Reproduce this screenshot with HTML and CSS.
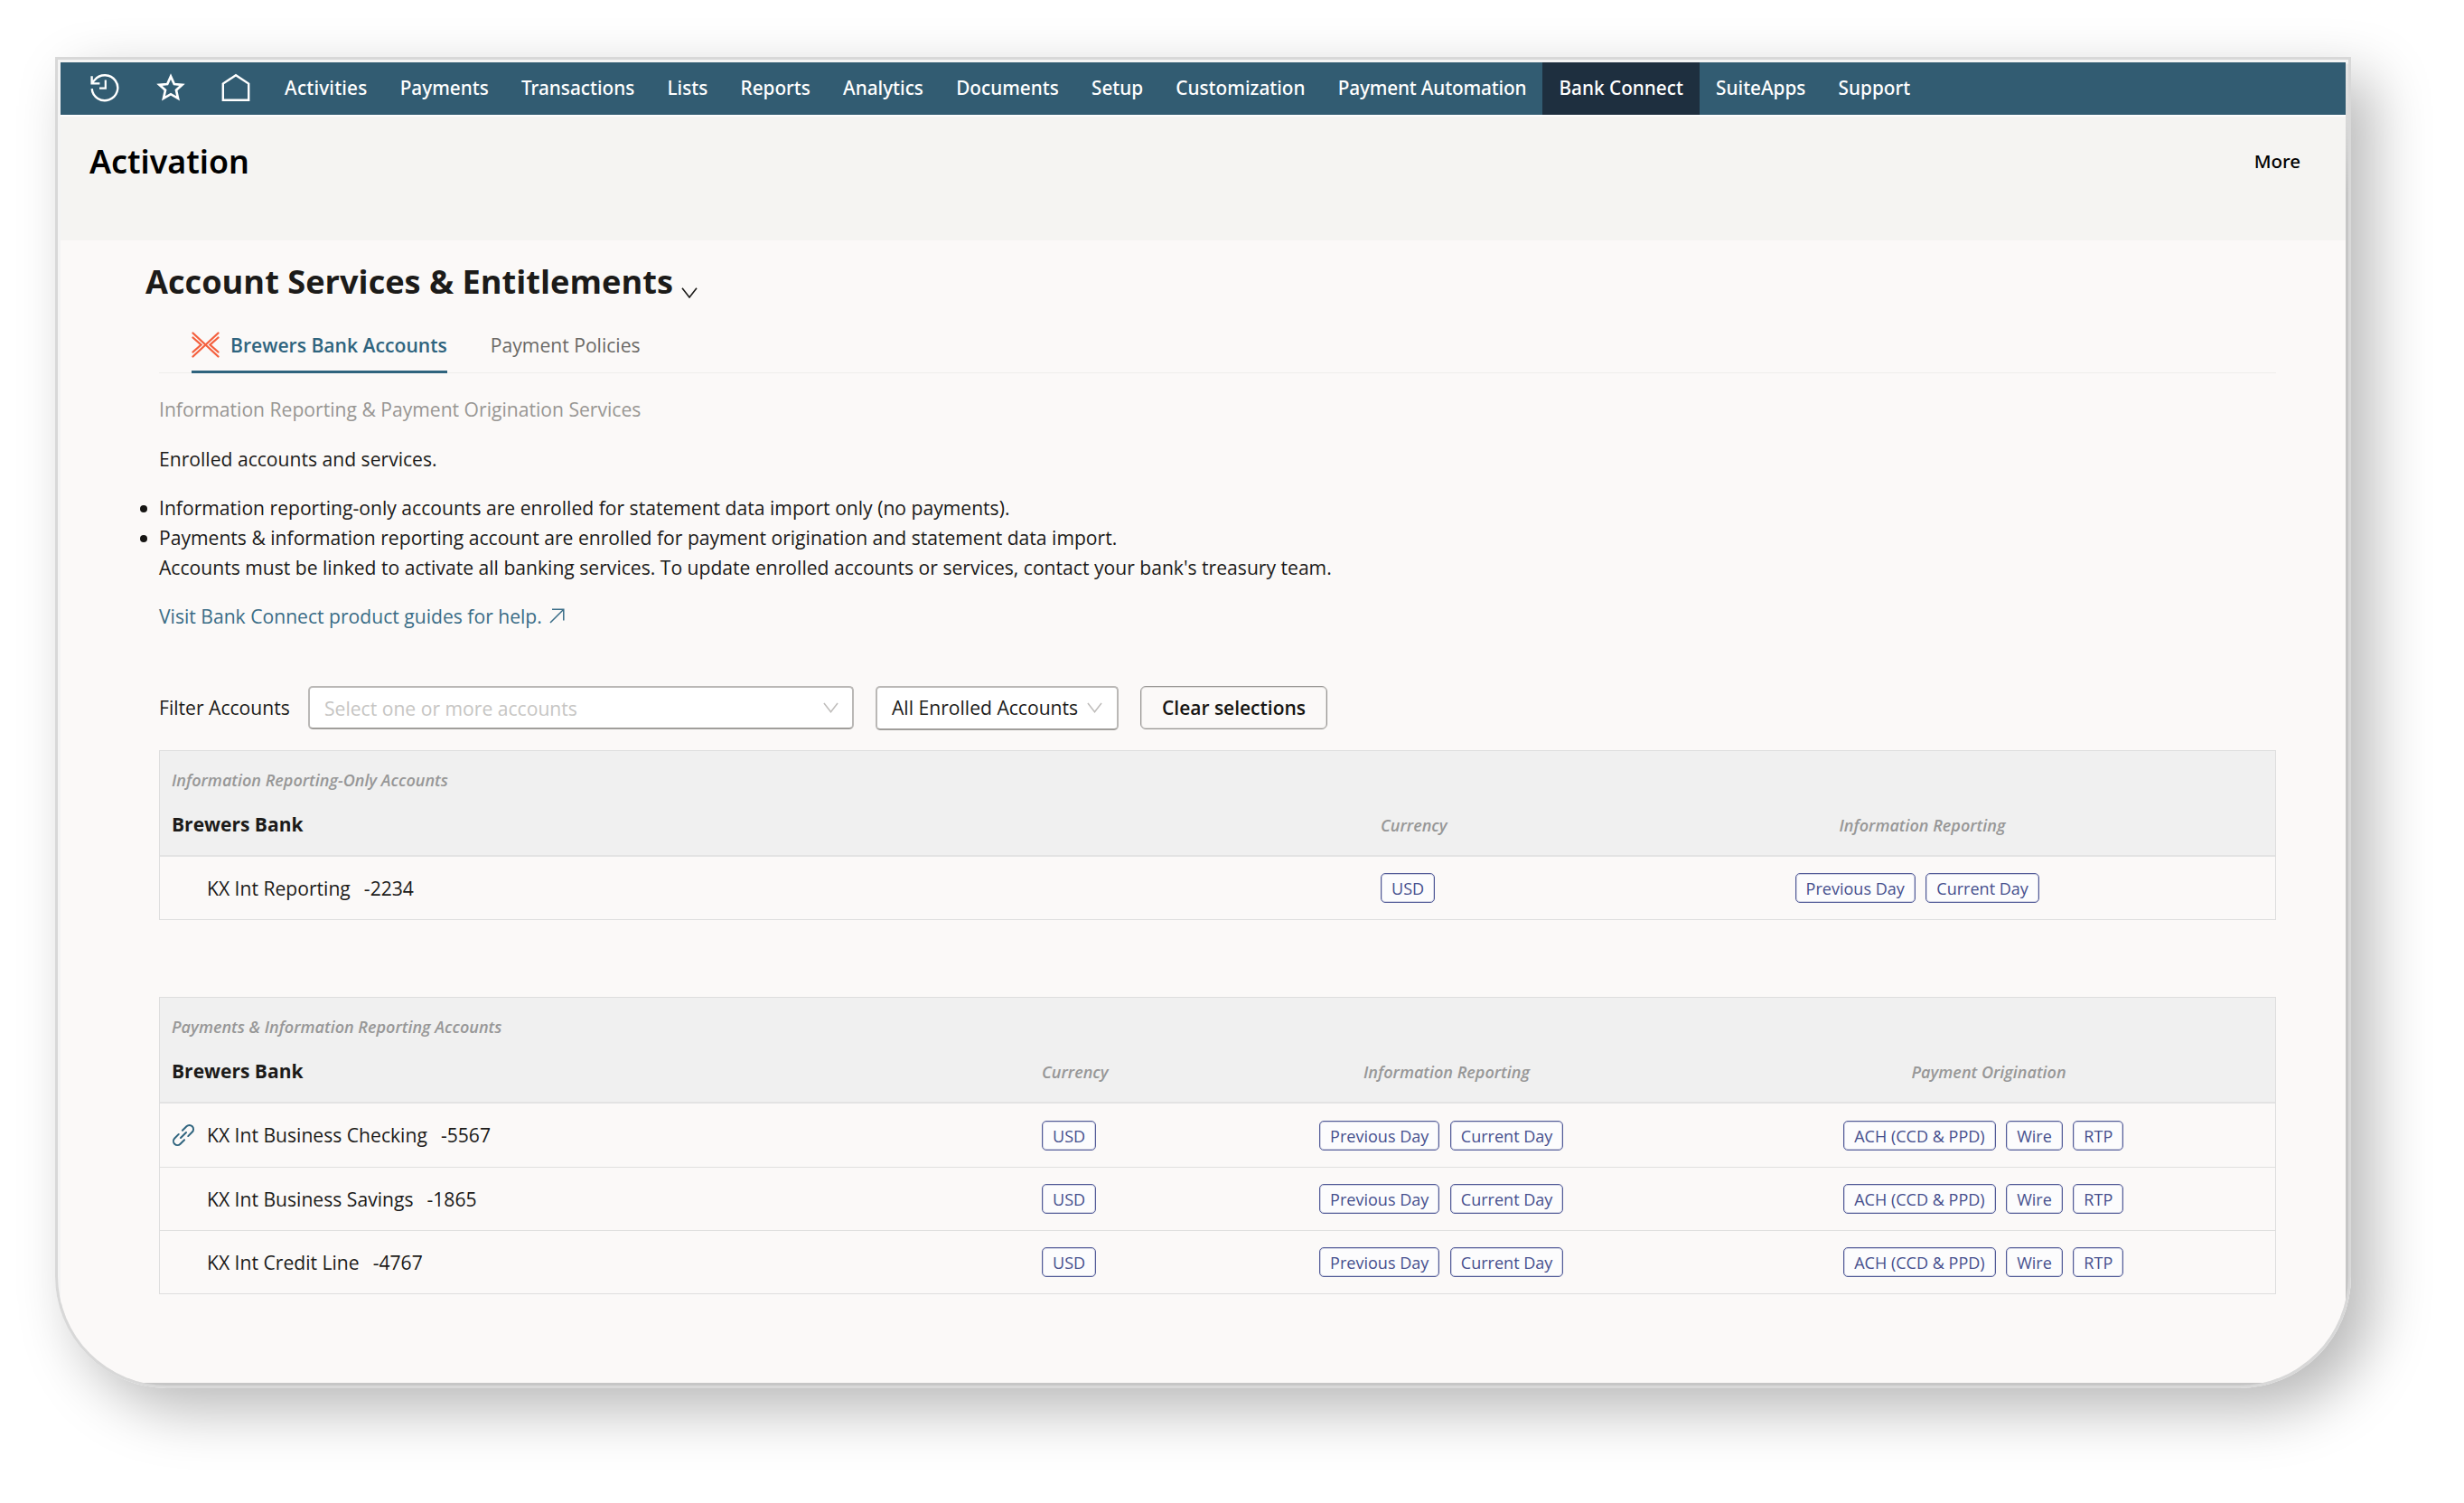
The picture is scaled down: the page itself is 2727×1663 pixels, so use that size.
FILE: index.html
```html
<!DOCTYPE html>
<html lang="en">
<head>
<meta charset="utf-8">
<title>Activation</title>
<link rel="stylesheet" href="styles.css">
</head>
<body>
<svg width="0" height="0" class="defs">
  <symbol id="chevron" viewBox="0 0 18 12"><path d="M1 .8 9 11 17 .8" fill="none" stroke="currentColor" stroke-width="1.6"/></symbol>
</svg>
<div class="shell">
  <div class="screen">
    <nav class="nav">
      <div class="nav-icons">
        <svg width="32" height="32" viewBox="0 0 32 32" fill="none" stroke="#fff" stroke-width="2.4"><path d="M1.7 17.2A14.3 14 0 1 0 5 7.2L1.8 10.6M1.6 3.2V11.4H10.4"/><path d="M16.8 7.5v9.2H10" stroke-width="2.2"/></svg>
        <svg width="32" height="32" viewBox="0 0 32 32" fill="none" stroke="#fff" stroke-width="2.7"><path d="M16 3.6 19.8 12 28.6 12.8 22 18.8 24 27.8 16 23.2 8 27.8 10 18.8 3.4 12.8 12.2 12Z"/></svg>
        <svg width="32" height="32" viewBox="0 0 32 32" fill="none" stroke="#fff" stroke-width="2.4"><path d="M1.8 29.8V11.6L16 2.2 30.2 11.6V29.8Z"/></svg>
      </div>
      <a class="loose">Activities</a><a>Payments</a><a>Transactions</a><a>Lists</a><a>Reports</a><a>Analytics</a><a>Documents</a><a>Setup</a><a>Customization</a><a class="tight">Payment Automation</a><a class="current">Bank Connect</a><a>SuiteApps</a><a>Support</a>
    </nav>
    <header class="page-head"><h1>Activation</h1><a class="more">More</a></header>
    <main class="main">
      <h2>Account Services &amp; Entitlements<svg width="18" height="12"><use href="#chevron"/></svg></h2>
      <div class="content">
        <div class="tabs">
          <div class="tab active"><svg width="31" height="29" viewBox="0 0 31 29" fill="none" stroke="#f4603e" stroke-width="2.3" stroke-linecap="round"><path d="M1.5 1.5 29.5 27.5M29.5 1.5 1.5 27.5M1.5 6.5 10.5 14.5 1.5 22.5M29.5 6.5 20.5 14.5 29.5 22.5"/></svg>Brewers Bank Accounts</div>
          <div class="tab">Payment Policies</div>
        </div>
        <p class="caption">Information Reporting &amp; Payment Origination Services</p>
        <p>Enrolled accounts and services.</p>
        <ul>
          <li>Information reporting-only accounts are enrolled for statement data import only (no payments).</li>
          <li>Payments &amp; information reporting account are enrolled for payment origination and statement data import.<br>Accounts must be linked to activate all banking services. To update enrolled accounts or services, contact your bank's treasury team.</li>
        </ul>
        <p class="link">Visit Bank Connect product guides for help.<svg width="17" height="17" viewBox="0 0 17 17" fill="none" stroke="currentColor" stroke-width="1.5"><path d="M1 16 15.8 1.2M3 1.2H15.8V13.4"/></svg></p>
        <div class="filters">
          <label>Filter Accounts</label>
          <div class="select wide"><span>Select one or more accounts</span><svg width="17" height="12"><use href="#chevron"/></svg></div>
          <div class="select"><span>All Enrolled Accounts</span><svg width="17" height="12"><use href="#chevron"/></svg></div>
          <button>Clear selections</button>
        </div>
        <section class="table reporting">
          <div class="thead">
            <div class="group">Information Reporting-Only Accounts</div>
            <div class="cols"><b>Brewers Bank</b><i>Currency</i><i class="mid">Information Reporting</i></div>
          </div>
          <div class="row cols"><div class="name">KX Int Reporting<span>-2234</span></div><div><em>USD</em></div><div class="mid"><em>Previous Day</em><em>Current Day</em></div></div>
        </section>
        <section class="table payments">
          <div class="thead">
            <div class="group">Payments &amp; Information Reporting Accounts</div>
            <div class="cols"><b>Brewers Bank</b><i>Currency</i><i class="mid">Information Reporting</i><i class="mid">Payment Origination</i></div>
          </div>
          <div class="row cols"><div class="name linked"><svg width="26" height="26" viewBox="0 0 24 24" fill="none" stroke="#2f647e" stroke-width="1.8" stroke-linecap="round"><path d="M9.2 14.8 14.8 9.2M11 7.2 15.2 3A4.1 4.1 0 0 1 21 8.8L16.8 13M13 16.8 8.8 21A4.1 4.1 0 0 1 3 15.2L7.2 11"/></svg>KX Int Business Checking<span>-5567</span></div><div><em>USD</em></div><div class="mid"><em>Previous Day</em><em>Current Day</em></div><div class="mid"><em>ACH (CCD &amp; PPD)</em><em>Wire</em><em>RTP</em></div></div>
          <div class="row cols"><div class="name">KX Int Business Savings<span>-1865</span></div><div><em>USD</em></div><div class="mid"><em>Previous Day</em><em>Current Day</em></div><div class="mid"><em>ACH (CCD &amp; PPD)</em><em>Wire</em><em>RTP</em></div></div>
          <div class="row cols"><div class="name">KX Int Credit Line<span>-4767</span></div><div><em>USD</em></div><div class="mid"><em>Previous Day</em><em>Current Day</em></div><div class="mid"><em>ACH (CCD &amp; PPD)</em><em>Wire</em><em>RTP</em></div></div>
        </section>
      </div>
    </main>
  </div>
</div>
</body>
</html>
```
FILE: styles.css
```css
* { box-sizing: border-box; }
body {
  margin: 0;
  height: 1663px;
  padding: 63px 0 0 61px;
  background: #fff;
  font: 400 21.12px/33.2px "Open Sans", sans-serif;
  color: #1c1b19;
}
h1, h2, p, ul { margin: 0; }
svg { flex: none; display: block; }
.defs { position: absolute; }

.shell {
  width: 2541px;
  height: 1473px;
  padding: 3px;
  border: 3px solid #d8d8d8;
  border-radius: 0 0 124px 124px;
  overflow: hidden;
  background: linear-gradient(90deg, #f4f4f4 4px, transparent 4px), linear-gradient(#f4f4f4 4px, #e6e6e6 5px, #c6c6c6 150px);
  box-shadow: 24px 24px 64px rgba(0, 0, 0, .28);
}
.screen { height: 100%; background: #fbf9f8; }

.nav {
  height: 60px;
  display: flex;
  background: #325c72;
  border-bottom: 2px solid #fdfdfd;
  font: 500 20.75px/57px "Noto Sans", sans-serif;
  color: #fff;
}
.nav-icons { display: flex; gap: 40.5px; padding: 12px 20px 0 33px; }
.nav a { padding: 0 18.1px; height: 58px; white-space: nowrap; }
.nav .loose { letter-spacing: .2px; }
.nav .tight { letter-spacing: -.15px; }
.nav .current { background: #1e2f3f; }

.page-head {
  height: 137px;
  padding: 24px 50px 0 32px;
  display: flex;
  justify-content: space-between;
  background: #f5f4f2;
  font-family: "Noto Sans", sans-serif;
  color: #000;
}
h1 { font-size: 35.8px; font-weight: 600; line-height: 50px; }
.more { font-size: 20.5px; font-weight: 500; line-height: 51px; }

.main { padding: 20px 77px 0 94px; }
h2 { display: flex; font-size: 36.2px; font-weight: 700; line-height: 50px; }
h2 svg { margin: 32px 0 0 9px; }
.content { padding-left: 15px; }

.tabs {
  display: flex;
  gap: 48px;
  height: 63px;
  margin-top: 14px;
  padding-left: 36px;
  line-height: 62px;
  border-bottom: 1px solid #efeeec;
  color: #6b6966;
}
.tab { display: flex; align-items: center; gap: 12px; height: 63px; }
.tab.active { font-weight: 600; color: #2f647e; box-shadow: inset 0 -3px #2f647e; }
.caption { margin-top: 23px; color: #989693; }
p + p { margin-top: 22px; }
ul, .link { margin-top: 21px; }
ul { padding: 0; list-style: none; line-height: 33px; }
li { position: relative; }
li::before {
  content: "";
  position: absolute;
  left: -21px;
  top: 14px;
  width: 8px;
  height: 8px;
  border-radius: 50%;
  background: #161513;
}
.link { display: flex; color: #3a6d87; }
.link svg { margin: 8px 0 0 8px; }

.filters { display: flex; margin-top: 60.6px; height: 49px; align-items: flex-start; }
.filters label { width: 165px; line-height: 47px; }
.select {
  display: flex;
  align-items: center;
  justify-content: space-between;
  width: 269px;
  height: 49px;
  padding: 0 16px 2px 16px;
  border: 2px solid #bab8b6;
  border-bottom-color: #a09e9b;
  border-radius: 5px;
  background: #fff;
}
.select.wide { width: 604px; height: 48px; margin-right: 24px; padding: 0 15px 0 16px; }
.wide span { color: #c6c5c3; }
.select svg { color: #bfbdbb; }
button {
  width: 207px;
  height: 48px;
  margin-left: 24px;
  padding: 1px 0 0;
  border: 1px solid #979593;
  box-shadow: inset 0 0 0 1px rgba(151, 149, 147, .3);
  border-radius: 6px;
  background: #fbf9f8;
  font: 600 20.97px/45px "Open Sans", sans-serif;
  color: #161513;
}

.table { border: 1px solid #dedede; margin-top: 22px; }
.table + .table { margin-top: 85px; }
.thead { height: 117px; padding-top: 20px; background: #f0f0f0; border-bottom: 2px solid #e3e3e3; }
.group { padding-left: 13px; font: italic 600 18.05px/24px "Open Sans", sans-serif; color: #979797; margin-bottom: 22px; }
.cols { display: grid; align-items: center; }
.reporting .cols { grid-template-columns: 1351px 209px 781px; }
.payments .cols { grid-template-columns: 976px 165px 566px 634px; }
.thead .cols { align-items: baseline; line-height: 30px; }
.thead b { padding-left: 13px; font-size: 21px; }
.thead i { font-weight: 600; font-size: 18.05px; color: #979797; }
.mid { text-align: center; }
.row { height: 70px; }
.reporting .row { height: 69px; }
.row + .row { border-top: 1px solid #e0e0df; }
.row > div { display: flex; align-items: center; }
.row .mid { justify-content: center; }
.row .name { padding-left: 52px; padding-bottom: 1px; }
.row .name.linked { padding-left: 13px; }
.name svg { margin-right: 13px; }
.name span { margin-left: 15px; }
em {
  height: 33px;
  padding: 0 11px;
  margin-right: 11.5px;
  border: 1px solid #525b98;
  box-shadow: inset 0 0 0 1px rgba(82, 91, 152, .25);
  border-radius: 5px;
  background: #fcfcfd;
  font: 400 18.05px/32px "Open Sans", sans-serif;
  color: #464f8d;
}
```
